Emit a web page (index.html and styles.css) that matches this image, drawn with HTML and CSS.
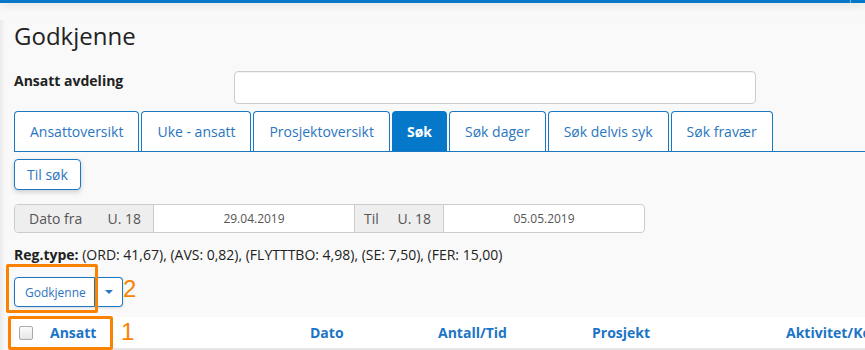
FILE: index.html
```html
<!DOCTYPE html>
<html lang="no">
<head>
    <meta charset="UTF-8">
    <meta name="viewport" content="width=device-width, initial-scale=1.0">
    <title>Godkjenne</title>
    <link rel="stylesheet" href="styles.css">
</head>
<body>
<div class="topbar"><span class="topbar-sep"></span></div>
<div class="page">
    <h1>Godkjenne</h1>
    <div class="field-row">
        <label class="field-label">Ansatt avdeling</label>
        <input class="field-input" type="text">
    </div>
    <ul class="tabs">
        <li>Ansattoversikt</li>
        <li>Uke - ansatt</li>
        <li>Prosjektoversikt</li>
        <li class="active">Søk</li>
        <li>Søk dager</li>
        <li>Søk delvis syk</li>
        <li>Søk fravær</li>
    </ul>
    <button class="btn btn-til">Til søk</button>
    <div class="date-row">
        <span class="addon addon-fra"><span>Dato fra</span><span class="week">U. 18</span></span>
        <span class="date-input date-fra">29.04.2019</span>
        <span class="addon addon-til"><span>Til</span><span class="week">U. 18</span></span>
        <span class="date-input date-til">05.05.2019</span>
    </div>
    <p class="regtype"><b>Reg.type:</b> (ORD: 41,67), (AVS: 0,82), (FLYTTTBO: 4,98), (SE: 7,50), (FER: 15,00)</p>
    <div class="split">
        <button class="btn btn-sm">Godkjenne</button><button class="btn btn-sm btn-caret"><span class="caret"></span></button>
        <span class="mark mark-2"></span>
        <span class="mark-num num-2">2</span>
    </div>
    <div class="grid-head">
        <div class="cell cell-ansatt"><span class="check"></span>Ansatt</div>
        <div class="cell">Dato</div>
        <div class="cell">Antall/Tid</div>
        <div class="cell">Prosjekt</div>
        <div class="cell">Aktivitet/Kommentar</div>
        <span class="mark mark-1"></span>
        <span class="mark-num num-1">1</span>
    </div>
</div>
</body>
</html>
```

FILE: styles.css
```css
body{
    margin: 0;
    background: #f9f9f9;
    font-family: "Open Sans", "Noto Sans", sans-serif;
    font-size: 14px;
    color: #333;
    overflow: hidden;
}
.topbar{
    height: 3px;
    background: #0678c9;
    box-shadow: 0 2px 8px rgba(0,0,0,.18);
    position: relative;
    z-index: 2;
}
.topbar-sep{
    position: absolute;
    left: 850px;top: 0;
    width: 1px;height: 3px;
    background: rgba(255,255,255,.45);
}
.page{
    padding: 0 0 0 14px;
    min-height: 347px;
    box-shadow: inset 5px 0 5px -3px rgba(0,0,0,.08);
}
h1{
    margin: 17px 0 0;
    font-size: 24px;
    font-weight: 400;
    line-height: 32px;
    color: #222;
}
.field-row{
    display: flex;
    margin-top: 19px;
}
.field-label{
    width: 220px;
    font-weight: 700;
    line-height: 20px;
    color: #222;
}
.field-input{
    width: 522px;height: 33px;
    box-sizing: border-box;
    border: 1px solid #ccc;
    border-radius: 4px;
    background: #fff;
    box-shadow: inset 0 1px 1px rgba(0,0,0,.05);
}
.tabs{
    list-style: none;
    margin: 7px 0 0;padding: 0;
    display: flex;
    border-bottom: 1px solid #1a78c2;
}
.tabs li{
    height: 40px;
    box-sizing: border-box;
    border: 1px solid #1a78c2;
    border-bottom: 0;
    border-radius: 4px 4px 0 0;
    padding: 0 15px;
    margin-right: 2px;
    line-height: 39px;
    background: #fff;
    color: #2a76c0;
}
.tabs li.active{
    background: #0678c9;
    border-color: #0678c9;
    color: #fff;
    font-weight: 700;
    padding: 0 14px;
}
.btn{
    font-family: inherit;
    background: #fff;
    border: 1px solid #1a78c2;
    border-radius: 4px;
    color: #2a76c0;
    padding: 0;
    cursor: pointer;
}
.btn-til{
    display: block;
    margin-top: 7px;
    height: 31px;
    padding: 0 12px;
    font-size: 14px;
    box-shadow: 0 2px 5px rgba(0,0,0,.18);
}
.date-row{
    display: flex;
    margin-top: 14px;
    width: 631px;height: 29px;
    box-sizing: border-box;
    border: 1px solid #ccc;
    border-radius: 4px;
    overflow: hidden;
    background: #fff;
}
.addon{
    display: flex;
    align-items: center;
    background: #eee;
    color: #555;
    padding-right: 12px;
    box-sizing: border-box;
}
.addon-fra{
    width: 138px;
    padding-left: 14px;
}
.addon-til{
    width: 90px;
    padding-left: 9px;
    border-left: 1px solid #ccc;
    border-right: 1px solid #ccc;
}
.week{
    margin-left: auto;
}
.date-input{
    display: flex;
    align-items: center;
    justify-content: center;
    font-size: 12px;
    color: #555;
}
.date-fra{
    width: 200px;
    border-left: 1px solid #ccc;
}
.date-til{
    flex: 1;
}
.regtype{
    margin: 12px 0 0;
    font-size: 14px;
    line-height: 20px;
    color: #222;
}
.split{
    position: relative;
    display: flex;
    margin-top: 12px;
}
.btn-sm{
    height: 30px;
    font-size: 12px;
    padding: 0 8px 0 10px;
    box-shadow: 0 1px 3px rgba(0,0,0,.12);
}
.split .btn-sm:first-child{
    border-radius: 4px 0 0 4px;
}
.btn-caret{
    width: 28px;
    border-left: 0;
    border-radius: 0 4px 4px 0;
    display: flex;
    align-items: center;
    justify-content: center;
}
.caret{
    width: 0;height: 0;
    border-left: 4px solid transparent;
    border-right: 4px solid transparent;
    border-top: 4px solid #2a76c0;
}
.mark{
    position: absolute;
    box-sizing: border-box;
    border: 3px solid #fb8200;
    border-radius: 2px;
}
.mark-num{
    position: absolute;
    font-family: "Liberation Sans", Arial, sans-serif;
    font-size: 24px;
    line-height: 24px;
    color: #fb8200;
}
.mark-2{
    left: -8px;top: -13px;
    width: 92px;height: 49px;
}
.num-2{
    left: 109px;top: 0;
}
.grid-head{
    position: relative;
    margin-top: 10px;
    display: grid;
    grid-template-columns: 288px 128px 154px 194px 200px;
    width: 980px;
    height: 31px;
    background: #fff;
    border-bottom: 2px solid #e6e6e6;
}
.cell{
    padding-left: 8px;
    line-height: 31px;
    font-weight: 700;
    color: #1b75c6;
    white-space: nowrap;
}
.cell-ansatt{
    display: flex;
    align-items: center;
    padding-left: 5px;
}
.check{
    width: 12px;height: 12px;
    border: 1px solid #aaa;
    border-radius: 2px;
    background: linear-gradient(#fafafa,#e6e6e6);
    margin-right: 17px;
}
.mark-1{
    left: -6px;top: -1px;
    width: 105px;height: 34px;
}
.num-1{
    left: 107px;top: 3px;
}
```
